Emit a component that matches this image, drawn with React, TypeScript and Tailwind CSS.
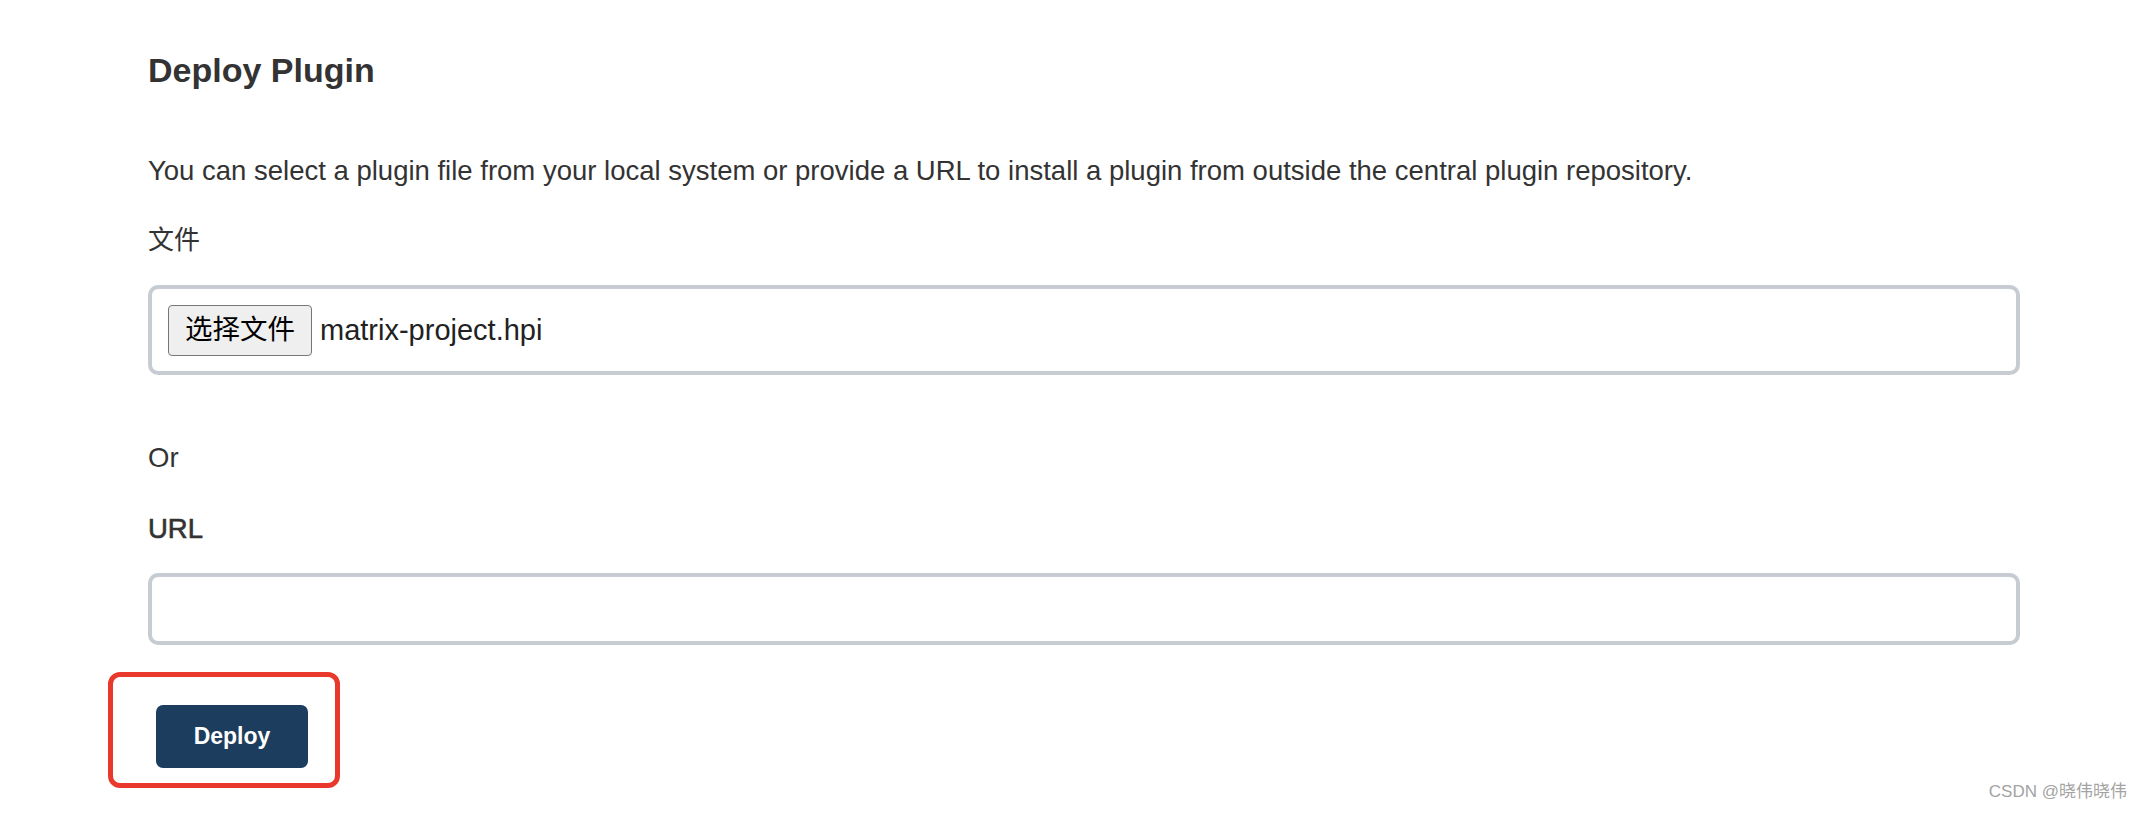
import React from "react";

export default function App() {
  return (
    <div className="relative w-[2144px] h-[816px] bg-white overflow-hidden font-['Liberation_Sans','Noto_Sans_CJK_SC',sans-serif] text-[#333333]">
      <div className="flex flex-col pl-[148px] pr-[124px] pt-[50px]">
        <h1 className="text-[34px] leading-[40px] font-bold">Deploy Plugin</h1>
        <p className="mt-[63px] text-[27.5px] leading-[36px]">
          You can select a plugin file from your local system or provide a URL to install a plugin from outside the central plugin repository.
        </p>
        <div className="mt-[33px] text-[26px] leading-[36px]">文件</div>
        <div className="mt-[27px] h-[90px] border-[4px] border-[#c6ccd1] rounded-[10px] flex items-center pl-[16px]">
          <button
            type="button"
            className="h-[51px] w-[144px] flex items-center justify-center bg-[#efefef] border-[1.5px] border-[#767676] rounded-[4px] text-[27.5px] leading-none text-black"
          >
            选择文件
          </button>
          <span className="ml-[8px] text-[29px] leading-[36px] text-[#222222]">matrix-project.hpi</span>
        </div>
        <div className="mt-[65px] text-[27.5px] leading-[36px]">Or</div>
        <div className="mt-[35px] text-[27.5px] leading-[36px] [-webkit-text-stroke:0.6px_#333333]">URL</div>
        <input
          type="text"
          className="mt-[26px] h-[72px] border-[4px] border-[#c6ccd1] rounded-[10px] px-[16px] text-[27px] outline-none bg-white"
        />
        <div className="mt-[27px] -ml-[40px] w-[232px] h-[116px] border-[5px] border-[#e8392c] rounded-[12px] pl-[43px] pt-[28px]">
          <button
            type="button"
            className="w-[152px] h-[63px] bg-[#1d3d5e] rounded-[7px] text-white font-bold text-[23px] leading-none flex items-center justify-center"
          >
            Deploy
          </button>
        </div>
      </div>
      <div className="absolute right-[17px] top-[782px] text-[17px] leading-[20px] text-[#a3a3a3]">CSDN @晓伟晓伟</div>
    </div>
  );
}
